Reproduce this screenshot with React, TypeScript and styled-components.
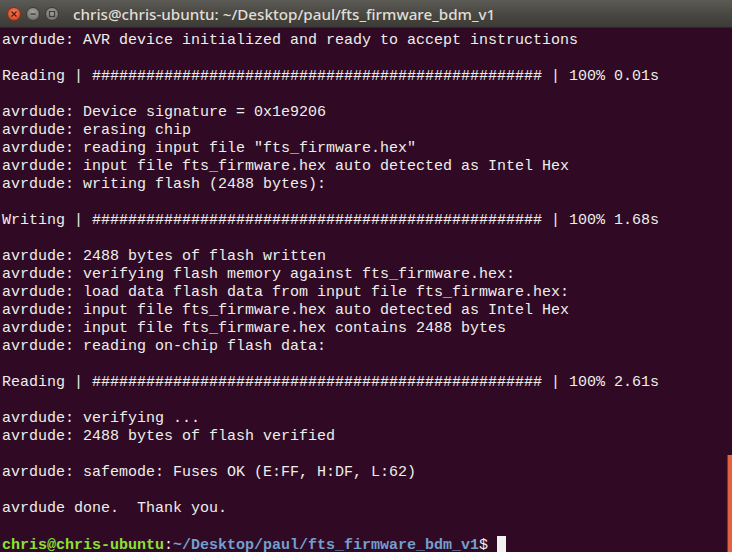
import React from "react";
import styled, { createGlobalStyle } from "styled-components";

const Global = createGlobalStyle`
  html, body { margin: 0; padding: 0; background: #300a24; }
  #root { width: 732px; height: 552px; }
`;

const Window = styled.div`
  width: 732px;
  height: 552px;
  display: flex;
  flex-direction: column;
  overflow: hidden;
  background: #300a24;
`;

const TitleBar = styled.div`
  height: 27px;
  flex: 0 0 27px;
  display: flex;
  align-items: center;
  padding-left: 7px;
  background: linear-gradient(#5b5a55, #46453f 60%, #3c3b37);
  border-bottom: 1px solid #2a2925;
`;

const Buttons = styled.div`
  display: flex;
  align-items: center;
  gap: 5px;
  margin-right: 14px;
`;

const WinButton = styled.div<{ $close?: boolean }>`
  width: 14px;
  height: 14px;
  border-radius: 50%;
  box-sizing: border-box;
  border: 1px solid ${(p) => (p.$close ? "#8a2d18" : "#3a3a36")};
  background: ${(p) =>
    p.$close
      ? "radial-gradient(circle at 50% 40%, #f58a68, #e2532f 60%, #b63a1c)"
      : "radial-gradient(circle at 50% 35%, #a5a49d, #7b7a74 65%, #5c5b56)"};
  display: flex;
  align-items: center;
  justify-content: center;
`;

const Title = styled.div`
  font-family: "Noto Sans", "Open Sans", sans-serif;
  font-size: 15.2px;
  font-weight: 500;
  color: #e0ddd6;
  white-space: nowrap;
`;

const Terminal = styled.div`
  position: relative;
  flex: 1;
  padding: 4px 0 0 2px;
`;

const Output = styled.pre`
  margin: 0;
  font-family: "Liberation Mono", "DejaVu Sans Mono", monospace;
  font-size: 15px;
  line-height: 18px;
  color: #eeeeec;
  white-space: pre;
`;

const Green = styled.span`
  color: #8ae234;
  font-weight: bold;
`;

const Blue = styled.span`
  color: #729fcf;
  font-weight: bold;
`;

const Cursor = styled.span`
  display: inline-block;
  width: 9px;
  height: 17px;
  background: #f2f2f0;
  vertical-align: -4px;
`;

const ScrollThumb = styled.div`
  position: absolute;
  right: 0;
  top: 427px;
  width: 4px;
  bottom: 0;
  background: #e0623e;
  border-left: 1px solid #8c2f1c;
`;

const bar = "#".repeat(50);

const lines = [
  "avrdude: AVR device initialized and ready to accept instructions",
  "",
  `Reading | ${bar} | 100% 0.01s`,
  "",
  "avrdude: Device signature = 0x1e9206",
  "avrdude: erasing chip",
  'avrdude: reading input file "fts_firmware.hex"',
  "avrdude: input file fts_firmware.hex auto detected as Intel Hex",
  "avrdude: writing flash (2488 bytes):",
  "",
  `Writing | ${bar} | 100% 1.68s`,
  "",
  "avrdude: 2488 bytes of flash written",
  "avrdude: verifying flash memory against fts_firmware.hex:",
  "avrdude: load data flash data from input file fts_firmware.hex:",
  "avrdude: input file fts_firmware.hex auto detected as Intel Hex",
  "avrdude: input file fts_firmware.hex contains 2488 bytes",
  "avrdude: reading on-chip flash data:",
  "",
  `Reading | ${bar} | 100% 2.61s`,
  "",
  "avrdude: verifying ...",
  "avrdude: 2488 bytes of flash verified",
  "",
  "avrdude: safemode: Fuses OK (E:FF, H:DF, L:62)",
  "",
  "avrdude done.  Thank you.",
  "",
];

export default function App() {
  return (
    <Window>
      <Global />
      <TitleBar>
        <Buttons>
          <WinButton $close>
            <svg width="8" height="8" viewBox="0 0 8 8">
              <path d="M1.5 1.5 L6.5 6.5 M6.5 1.5 L1.5 6.5" stroke="#5a1a0c" strokeWidth="1.4" />
            </svg>
          </WinButton>
          <WinButton>
            <svg width="8" height="8" viewBox="0 0 8 8">
              <path d="M1.5 4 H6.5" stroke="#3d3c38" strokeWidth="1.4" />
            </svg>
          </WinButton>
          <WinButton>
            <svg width="8" height="8" viewBox="0 0 8 8">
              <rect x="1.5" y="1.5" width="5" height="5" fill="none" stroke="#3d3c38" strokeWidth="1.2" />
            </svg>
          </WinButton>
        </Buttons>
        <Title>chris@chris-ubuntu: ~/Desktop/paul/fts_firmware_bdm_v1</Title>
      </TitleBar>
      <Terminal>
        <Output>
          {lines.join("\n") + "\n"}
          <Green>chris@chris-ubuntu</Green>:<Blue>~/Desktop/paul/fts_firmware_bdm_v1</Blue>${" "}
          <Cursor />
        </Output>
        <ScrollThumb />
      </Terminal>
    </Window>
  );
}
